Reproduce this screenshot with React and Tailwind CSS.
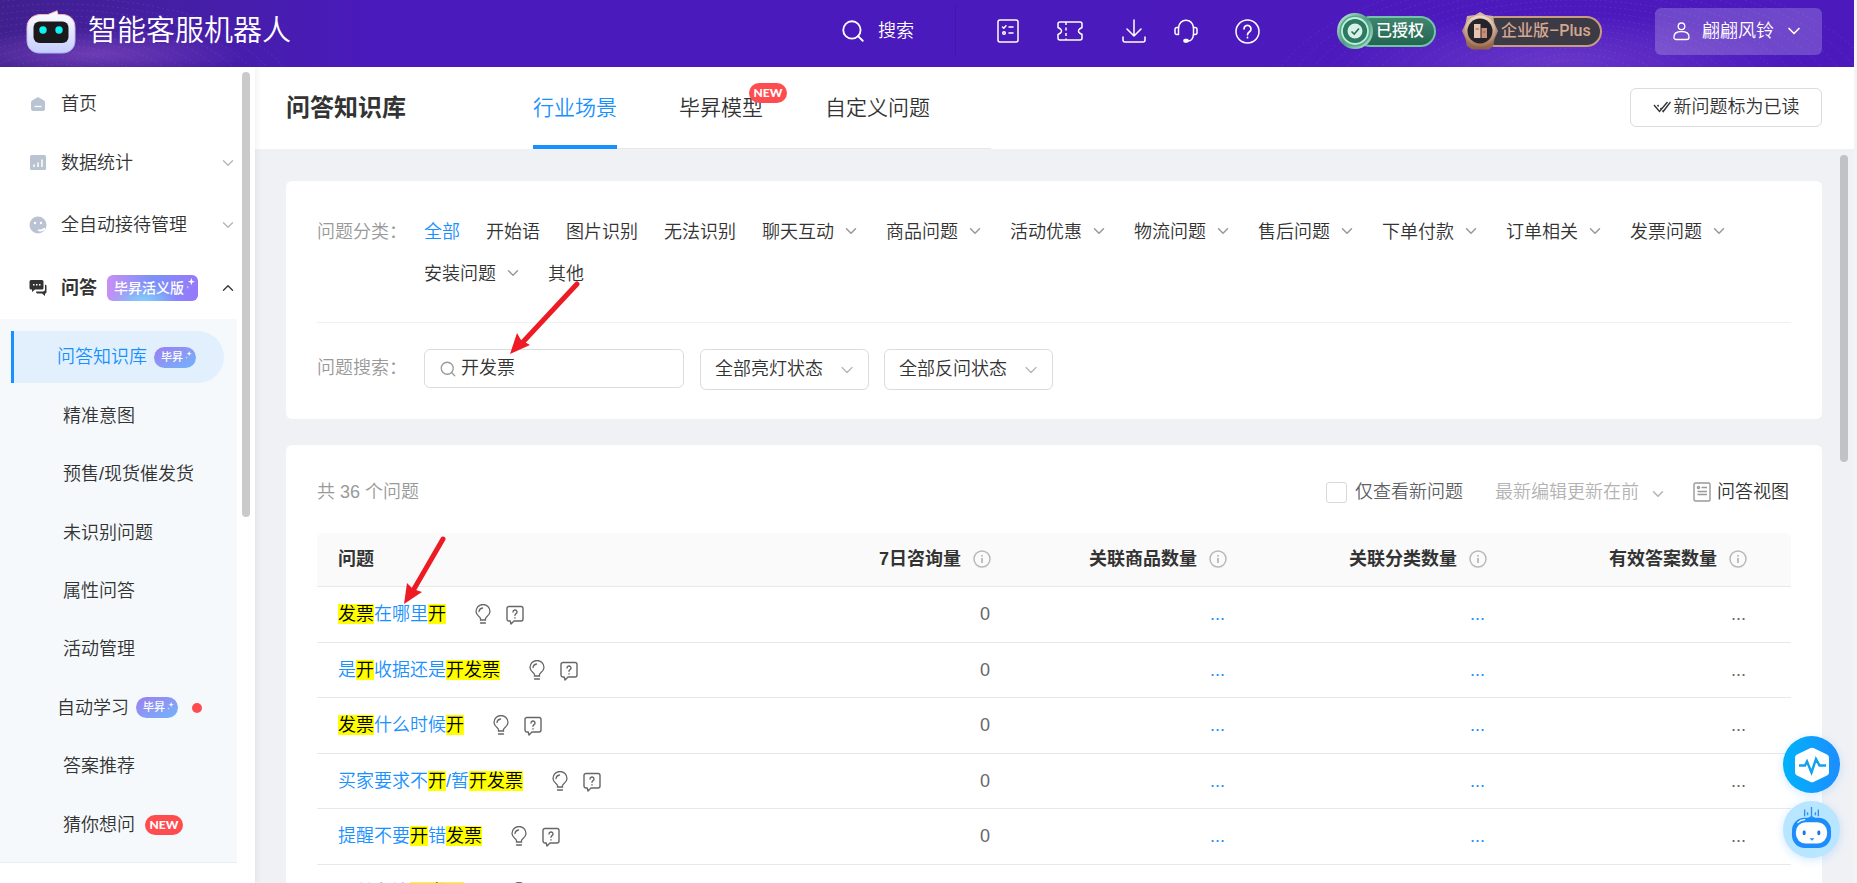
import { useState } from 'react';
import { ChevronDown, ChevronUp, Search } from 'lucide-react';

const CATEGORIES = [
    { label: '全部' },
    { label: '开始语' },
    { label: '图片识别' },
    { label: '无法识别' },
    { label: '聊天互动', more: true },
    { label: '商品问题', more: true },
    { label: '活动优惠', more: true },
    { label: '物流问题', more: true },
    { label: '售后问题', more: true },
    { label: '下单付款', more: true },
    { label: '订单相关', more: true },
    { label: '发票问题', more: true },
    { label: '安装问题', more: true },
    { label: '其他' },
];

const SUB_MENU = [
    { label: '问答知识库', badge: true },
    { label: '精准意图' },
    { label: '预售/现货催发货' },
    { label: '未识别问题' },
    { label: '属性问答' },
    { label: '活动管理' },
    { label: '自动学习', badge: true, dot: true },
    { label: '答案推荐' },
    { label: '猜你想问', isNew: true },
];

// Parts wrapped in [] are the matched keywords
const QUESTIONS = [
    '[发票]在哪里[开]',
    '是[开]收据还是[开发票]',
    '[发票]什么时候[开]',
    '买家要求不[开]/暂[开发票]',
    '提醒不要[开]错[发票]',
    '下单备注[开发票]吗',
];

const COLUMNS = ['7日咨询量', '关联商品数量', '关联分类数量', '有效答案数量'];

const Sparkle = ({ className }) => (
    <svg viewBox="0 0 10 12" className={className} fill="#fff">
        <path d="M6 0l1 3 3 1-3 1-1 3-1-3-3-1 3-1z" />
        <path d="M2 8l.5 1.500L4 10l-1.500.5L2 12l-.5-1.500L0 10l1.500-.5z" opacity=".6" />
    </svg>
);

const BishengBadge = () => (
    <span className="flex h-[21px] w-[42px] items-center rounded-full bg-linear-to-br from-[#9b7df0] to-[#6cb4fb] pl-[7px] text-[11px] leading-none font-medium text-white">
        毕昇
        <Sparkle className="mb-1 ml-[2px] h-2 w-[7px]" />
    </span>
);

const NewBadge = () => (
    <span className="flex h-5 w-[38px] items-center justify-center rounded-full bg-[#ff4d4f] font-[Lato] text-xs leading-none font-black text-white">
        NEW
    </span>
);

const InfoIcon = () => (
    <svg viewBox="0 0 18 18" className="size-[18px]" fill="none" stroke="#b8b8b8" strokeWidth="1.500">
        <circle cx="9" cy="9" r="8" />
        <path d="M9 8v5M9 5v1.500" strokeWidth="1.800" />
    </svg>
);

const BulbIcon = () => (
    <svg viewBox="0 0 16 20" className="h-5 w-4" fill="none" stroke="#666" strokeWidth="1.300" strokeLinecap="round">
        <path d="M5.500 16v-1.500C5.500 12.800 1 11.500 1 7.500a7 7 0 0 1 14 0c0 4-4.500 5.300-4.500 7V16z" />
        <path d="M4 7.500A4 4 0 0 1 7.500 4M5.500 19h5" />
    </svg>
);

const AskIcon = () => (
    <svg viewBox="0 0 18 20" className="mt-[2px] h-5 w-[18px]" fill="none" stroke="#666" strokeWidth="1.400" strokeLinecap="round" strokeLinejoin="round">
        <path d="M3 1.500h12a2 2 0 0 1 2 2V14a2 2 0 0 1-2 2H8l-3 3-.8-3H3a2 2 0 0 1-2-2V3.500a2 2 0 0 1 2-2z" />
        <path d="M7 7a2 2 0 1 1 3 1.700c-.7.4-1 .8-1 1.600M9 12.800v.2" />
    </svg>
);

const Logo = () => (
    <svg viewBox="0 0 50 44" className="mb-[3px] h-11 w-[50px]">
        <defs>
            <linearGradient id="logoBody" x1="0" y1="0" x2="0" y2="1">
                <stop offset="0" stopColor="#fff" />
                <stop offset="1" stopColor="#c5cdfd" />
            </linearGradient>
            <linearGradient id="logoEdge" x1="0" y1="0" x2="0" y2="1">
                <stop offset="0" stopColor="#ffb3b0" />
                <stop offset="1" stopColor="#a9b6f7" />
            </linearGradient>
        </defs>
        <path d="M15 4.500h7L31 .8l1 3.700h4c8 0 13 5 13 13V30c0 8-5 13-13 13H14C6 43 1 38 1 30V17.500c0-8 6-13 14-13z" fill="url(#logoBody)" stroke="url(#logoEdge)" />
        <rect x="7.500" y="11.500" width="35" height="21.500" rx="6" fill="#1a1a1c" />
        <circle cx="17" cy="20" r="3.700" fill="#0ff1f5" />
        <circle cx="33" cy="20" r="3.700" fill="#0ff1f5" />
    </svg>
);

const HeaderWaves = () => (
    <svg className="absolute inset-0 size-full" aria-hidden="true">
        <defs>
            <radialGradient id="glowLeft">
                <stop offset="0" stopColor="#8a4fc4" stopOpacity=".6" />
                <stop offset="1" stopColor="#8a4fc4" stopOpacity="0" />
            </radialGradient>
            <radialGradient id="glowRight">
                <stop offset="0" stopColor="#7a4ad0" stopOpacity=".6" />
                <stop offset="1" stopColor="#7a4ad0" stopOpacity="0" />
            </radialGradient>
        </defs>
        <ellipse cx="95" cy="54" rx="150" ry="26" fill="url(#glowLeft)" />
        <ellipse cx="84%" cy="60" rx="230" ry="46" fill="url(#glowRight)" />
        <g fill="none" stroke="#9a78dc" strokeOpacity=".2" strokeDasharray="2 3">
            {Array.from({ length: 12 }, (_, i) => (
                <ellipse key={i} cx="60" cy="100" rx={60 + i * 16} ry={36 + i * 6} />
            ))}
            {Array.from({ length: 16 }, (_, i) => (
                <ellipse key={i} cx="85%" cy="110" rx={70 + i * 16} ry={50 + i * 6} />
            ))}
        </g>
    </svg>
);

const HeaderIcons = () => (
    <div className="flex items-center">
        <button aria-label="任务" className="mr-[38px]">
            <svg viewBox="0 0 22 24" className="h-6 w-[22px]" fill="none" stroke="#fff" strokeWidth="1.500" strokeLinecap="round" strokeLinejoin="round">
                <rect x="1" y="1" width="20" height="22" rx="2" />
                <path d="M5.500 8l1.300 1.300L9 6.800M12 8h4M12 14h4" />
                <circle cx="7" cy="14" r="1.300" />
            </svg>
        </button>
        <button aria-label="卡券" className="mr-[39px]">
            <svg viewBox="0 0 26 20" className="h-5 w-[26px]" fill="none" stroke="#fff" strokeWidth="1.500" strokeLinejoin="round">
                <path d="M3 1h20a2 2 0 0 1 2 2v3.500l-2.500 1.500a2.500 2.500 0 0 0 0 4l2.500 1.500V17a2 2 0 0 1-2 2H3a2 2 0 0 1-2-2v-3.500L3.500 12a2.500 2.500 0 0 0 0-4L1 6.500V3a2 2 0 0 1 2-2z" />
                <path d="M9 1v18" strokeDasharray="3 2.500" />
            </svg>
        </button>
        <button aria-label="下载" className="mr-[28px]">
            <svg viewBox="0 0 24 24" className="size-6" fill="none" stroke="#fff" strokeWidth="1.500" strokeLinecap="round" strokeLinejoin="round">
                <path d="M12 1v16M5 10l7 7 7-7M1 18v3a2 2 0 0 0 2 2h18a2 2 0 0 0 2-2v-3" />
            </svg>
        </button>
        <button aria-label="客服" className="mr-[37px]">
            <svg viewBox="0 0 24 24" className="size-6" fill="none" stroke="#fff" strokeWidth="1.500" strokeLinecap="round" strokeLinejoin="round">
                <path d="M4.500 8.500C5.300 4 8 1.200 12 1.200s6.700 2.800 7.500 7.300M19.500 15.500c-.5 4-2.500 6.500-5.500 6.500" />
                <path d="M4.500 8.500H3a2 2 0 0 0-2 2v3a2 2 0 0 0 2 2h1.500zM19.500 8.500H21a2 2 0 0 1 2 2v3a2 2 0 0 1-2 2h-1.500z" />
                <rect x="10" y="20.500" width="4" height="2.500" rx="1" fill="#fff" />
            </svg>
        </button>
        <button aria-label="帮助">
            <svg viewBox="0 0 25 25" className="size-[25px]" fill="none" stroke="#fff" strokeWidth="1.500" strokeLinecap="round">
                <circle cx="12.500" cy="12.500" r="11.500" />
                <path d="M9 9.800a3.500 3.500 0 1 1 5.500 2.900c-1.300.9-2 1.500-2 3M12.500 18.300v.4" strokeWidth="1.700" />
            </svg>
        </button>
    </div>
);

const AuthorizedBadge = () => (
    <div className="flex w-[99px] items-center">
        <svg viewBox="0 0 38 38" className="z-10 -mr-5 size-[38px] shrink-0">
            <defs>
                <linearGradient id="medalGreen" x1="0" y1="0" x2="1" y2="1">
                    <stop offset="0" stopColor="#c9f5e2" />
                    <stop offset=".5" stopColor="#4d9c80" />
                    <stop offset="1" stopColor="#b5f0da" />
                </linearGradient>
            </defs>
            <circle cx="18" cy="19" r="18" fill="url(#medalGreen)" />
            <circle cx="18" cy="19" r="15.500" fill="#5ba68c" />
            <circle cx="18" cy="19" r="13" fill="#2c7a62" stroke="#bff0dd" strokeWidth="1.800" />
            <circle cx="18" cy="19" r="7.500" fill="#d9f0e7" />
            <path d="M14.500 19.500l2.700 2.500 4.800-5.500" fill="none" stroke="#2a6e5a" strokeWidth="1.600" />
        </svg>
        <span className="flex h-[31px] flex-1 items-center rounded-full border-2 border-[#72c4a6] bg-linear-to-b from-[#3f8570] to-[#226650] pl-[19px] text-base leading-none font-medium text-white">
            已授权
        </span>
    </div>
);

const PlusBadge = () => (
    <div className="flex w-[140px] items-center">
        <svg viewBox="0 0 38 38" className="z-10 -mr-5 size-[38px] shrink-0">
            <defs>
                <linearGradient id="medalBronze" x1="0" y1="0" x2="0" y2="1">
                    <stop offset="0" stopColor="#f3dccb" />
                    <stop offset="1" stopColor="#a3704f" />
                </linearGradient>
                <linearGradient id="medalRim" x1="0" y1="0" x2="0" y2="1">
                    <stop offset="0" stopColor="#d9bda8" />
                    <stop offset="1" stopColor="#8a5f49" />
                </linearGradient>
            </defs>
            <path d="M18 0l5.500 3L31 4l1.500 7.500L36 19l-3.500 8-1.500 7-4 3.500H10L5 34l-1.500-7L0 19l3.500-7.500L5 4l8-1z" fill="url(#medalRim)" />
            <circle cx="18" cy="19" r="15.500" fill="url(#medalBronze)" />
            <circle cx="18" cy="19" r="12.500" fill="#25242a" />
            <path d="M12 12h6.500v14H12z" fill="#e8c4b0" />
            <path d="M19.500 16H25v10h-5.500z" fill="#c98f76" />
            <path d="M13.500 17h3.500M21 20h2.500" stroke="#8a5f49" />
        </svg>
        <span className="flex h-[31px] flex-1 items-center rounded-full border-2 border-[#c79c80] bg-[#3c3b45] pl-[19px] font-[Roboto,'Noto_Sans_CJK_SC',sans-serif] text-base leading-none font-medium whitespace-nowrap text-[#d3a791]">
            企业版–Plus
        </span>
    </div>
);

const Header = () => (
    <header className="relative flex h-[67px] shrink-0 items-center justify-between overflow-hidden bg-linear-to-r from-[#40208f] via-[#4a1abc] via-20% to-[#4c19bd] pr-8 pl-[26px] text-white">
        <HeaderWaves />
        <a href="#home" className="relative flex items-center gap-3">
            <Logo />
            <span className="mb-[5px] text-[29px] leading-none">智能客服机器人</span>
        </a>
        <div className="relative mb-[5px] flex items-center">
            <button className="flex items-center gap-3 text-lg">
                <Search className="size-[26px]" strokeWidth={1.7} />
                搜索
            </button>
            <span className="mx-[41px] h-[50px] w-px bg-[#4316a8]" />
            <HeaderIcons />
            <div className="ml-[77px] flex items-center gap-[26px]">
                <AuthorizedBadge />
                <PlusBadge />
            </div>
            <button className="ml-[53px] flex h-[47px] w-[167px] items-center rounded-md bg-white/20 pl-[18px] text-lg">
                <svg viewBox="0 0 18 20" className="mr-3 h-5 w-[17px]" fill="none" stroke="#fff" strokeWidth="1.400">
                    <circle cx="9" cy="5" r="3.500" />
                    <path d="M1 16.500c0-4 3-6 8-6s8 2 8 6c0 1.500-.8 2.500-2.500 2.500h-11C1.800 19 1 18 1 16.500z" />
                </svg>
                翩翩风铃
                <ChevronDown className="ml-[10px] size-5" strokeWidth={2} />
            </button>
        </div>
    </header>
);

const MenuRow = ({ icon, label, arrow }) => (
    <a href="#menu" className="flex h-[62px] items-center pl-[29px] first:mt-[9px] first:h-14">
        <span className="w-8">{icon}</span>
        <span className="flex-1">{label}</span>
        {arrow && <ChevronDown className="size-[18px] text-[#b5b5b5]" strokeWidth={1.7} />}
    </a>
);

const Sidebar = () => {
    const [active, setActive] = useState('问答知识库');

    return (
        <aside className="z-10 flex w-[255px] shrink-0 bg-white shadow-[2px_0_6px_rgba(0,0,0,0.06)]">
            <nav className="w-[237px] text-lg text-[#333]">
                <MenuRow
                    label="首页"
                    icon={
                        <svg viewBox="0 0 18 18" className="size-[18px]">
                            <path d="M9 2l6 3.500q1 .7 1 2V14q0 2-2 2H4q-2 0-2-2V7.500q0-1.300 1-2z" fill="#bac3d1" />
                            <path d="M5.500 11.500h7" stroke="#fff" strokeWidth="1.300" />
                        </svg>
                    }
                />
                <MenuRow
                    arrow
                    label="数据统计"
                    icon={
                        <svg viewBox="0 0 18 18" className="size-[18px]">
                            <rect x="1" y="1" width="16" height="15" rx="1.500" fill="#bac3d1" />
                            <path d="M5 13v-2.500M9 13V8.500M13 13V5.500" stroke="#fff" strokeWidth="1.500" />
                        </svg>
                    }
                />
                <MenuRow
                    arrow
                    label="全自动接待管理"
                    icon={
                        <svg viewBox="0 0 18 18" className="size-[18px]">
                            <circle cx="9" cy="9" r="8.500" fill="#bac3d1" />
                            <circle cx="6" cy="7" r="1.200" fill="#fff" />
                            <circle cx="12" cy="7" r="1.200" fill="#fff" />
                            <path d="M9 14q3 1.500 7-1.500" fill="none" stroke="#fff" strokeWidth="1.800" />
                        </svg>
                    }
                />
                <a href="#qa" className="flex h-[63px] items-center pl-[29px] font-bold">
                    <span className="w-8">
                        <svg viewBox="0 0 18 18" className="size-[18px]" fill="#333">
                            <path d="M2 1h11q1.500 0 1.500 1.500V9q0 1.500-1.500 1.500H6L3 13v-2.500H2Q.5 10.500.5 9V2.500Q.5 1 2 1z" />
                            <path d="M16 5.500q1.500.3 1.500 1.800V13q0 1.500-1.500 1.500V17l-3-2.500H8Q7 14 7 12.500h7q2 0 2-2z" />
                            <path d="M4 5.800h1.500M7 5.800h1.500M10 5.800h1.500" stroke="#fff" strokeWidth="1.500" />
                        </svg>
                    </span>
                    <span>问答</span>
                    <span className="ml-[10px] flex h-[26px] w-[91px] items-center rounded-md bg-[radial-gradient(ellipse_at_40%_100%,#82cffa_0%,transparent_45%),linear-gradient(90deg,#c78ff5,#7b92f8_50%,#9878fb)] pl-[7px] text-sm leading-none font-medium text-white">
                        毕昇活义版
                        <Sparkle className="mb-2 ml-[2px] h-[11px] w-[9px]" />
                    </span>
                    <ChevronUp className="ml-auto size-[18px]" strokeWidth={1.7} />
                </a>
                <ul className="grid h-[544px] auto-rows-fr border-b border-[#e3effb] bg-[#f5f9fc] pt-[9px] pb-2">
                    {SUB_MENU.map((item) => (
                        <li key={item.label} className="flex items-center pr-[13px] pl-[11px]">
                            <a
                                href="#sub"
                                onClick={() => setActive(item.label)}
                                className={`flex h-[52px] flex-1 items-center gap-[7px]
                                    ${item.label === active
                                        ? 'rounded-r-full border-l-3 border-[#1890ff] bg-[#e2f0fe] text-[#1890ff]'
                                        : 'border-l-3 border-transparent'}
                                    ${item.badge ? 'pl-[43px]' : 'pl-[49px]'}`}
                            >
                                {item.label}
                                {item.badge && <BishengBadge />}
                                {item.dot && <span className="ml-[7px] size-[10px] rounded-full bg-[#ff4d4f]" />}
                                {item.isNew && <span className="ml-[3px]"><NewBadge /></span>}
                            </a>
                        </li>
                    ))}
                </ul>
            </nav>
            <div className="pt-[5px] pl-[5px]">
                <div className="h-[445px] w-2 rounded-full bg-[#cacaca]" />
            </div>
        </aside>
    );
};

const TitleBar = () => {
    const [tab, setTab] = useState('行业场景');

    return (
        <div className="flex h-[82px] shrink-0 items-center bg-white pr-8 pl-[31px] text-[#333]">
            <h1 className="w-[247px] text-2xl font-bold">问答知识库</h1>
            <div className="flex h-full gap-[62px] border-b border-[#e8e8e8] pr-[61px] text-[21px]">
                {['行业场景', '毕昇模型', '自定义问题'].map((name) => (
                    <button
                        key={name}
                        onClick={() => setTab(name)}
                        className={`relative -mb-px border-y-4 border-t-transparent
                            ${tab === name ? 'border-b-[#1890ff] text-[#1890ff]' : 'border-b-transparent'}`}
                    >
                        {name}
                        {name === '毕昇模型' && (
                            <span className="absolute top-3 -right-6">
                                <NewBadge />
                            </span>
                        )}
                    </button>
                ))}
            </div>
            <button className="mb-[2px] ml-auto flex h-[39px] w-[192px] items-center justify-center gap-[3px] rounded-md border border-[#dcdcdc] text-lg">
                <svg viewBox="0 0 18 14" className="h-[14px] w-[18px]" fill="none" stroke="#333" strokeWidth="1.400">
                    <path d="M1 5l5.500 6.500L14.500 2M4.500 5l1.200 1.500M9.500 10.500l.7 1L17.500 2M7.500 8l1 1.200" />
                </svg>
                新问题标为已读
            </button>
        </div>
    );
};

const StatusSelect = ({ label }) => (
    <div className="grid w-[169px] items-center">
        <select
            aria-label={label}
            className="col-start-1 row-start-1 h-[41px] w-full appearance-none rounded-md border border-[#dcdcdc] bg-white pl-[14px] text-[#333]"
        >
            <option>{label}</option>
        </select>
        <ChevronDown className="pointer-events-none col-start-1 row-start-1 mr-3 size-5 justify-self-end text-[#b5b5b5]" strokeWidth={1.5} />
    </div>
);

const FilterCard = () => {
    const [category, setCategory] = useState('全部');
    const [keyword, setKeyword] = useState('开发票');

    return (
        <section className="rounded-md bg-white px-[31px] pt-[39px] pb-[29px] text-lg leading-[25px]">
            <div className="flex border-b border-[#f0f0f0] pb-[35px]">
                <span className="w-[107px] shrink-0 text-[#999]">问题分类：</span>
                <div className="flex flex-wrap gap-x-[26px] gap-y-[17px]">
                    {CATEGORIES.map((item) => (
                        <button
                            key={item.label}
                            onClick={() => setCategory(item.label)}
                            className={`flex items-center gap-2 ${category === item.label ? 'text-[#1890ff]' : 'text-[#333]'}`}
                        >
                            {item.label}
                            {item.more && <ChevronDown className="mb-[3px] size-[18px] text-[#999]" strokeWidth={2} />}
                        </button>
                    ))}
                </div>
            </div>
            <div className="mt-[26px] flex items-start">
                <label htmlFor="keyword" className="w-[107px] shrink-0 leading-[39px] text-[#999]">问题搜索：</label>
                <div className="mr-4 flex h-[39px] w-[260px] items-center gap-1 rounded-md border border-[#dcdcdc] pl-[14px]">
                    <Search className="size-[18px] shrink-0 text-[#999]" strokeWidth={1.7} />
                    <input
                        id="keyword"
                        value={keyword}
                        onChange={(e) => setKeyword(e.target.value)}
                        className="w-full min-w-0 text-[#333] outline-none"
                    />
                </div>
                <div className="flex gap-[15px]">
                    <StatusSelect label="全部亮灯状态" />
                    <StatusSelect label="全部反问状态" />
                </div>
            </div>
        </section>
    );
};

const QuestionText = ({ text }) => (
    <a href="#question" className="text-[#1890ff]">
        {text.split(/[[\]]/).map((part, i) => (
            i % 2 === 1 ? <mark key={i} className="bg-[#ff0] text-black">{part}</mark> : part
        ))}
    </a>
);

const QuestionTable = () => (
    <table className="w-full table-fixed text-lg">
        <thead>
            <tr className="h-[53px] text-[#333]">
                <th className="rounded-tl-md border-b border-[#e8e8e8] bg-[#fafafa] pl-[21px] text-left">问题</th>
                {COLUMNS.map((name, i) => (
                    <th
                        key={name}
                        className={`border-b border-[#e8e8e8] bg-[#fafafa] pr-[44px] last:rounded-tr-md
                            ${i < 2 ? 'w-[236px]' : 'w-[260px]'}`}
                    >
                        <span className="flex items-center justify-end gap-3">
                            {name}
                            <InfoIcon />
                        </span>
                    </th>
                ))}
            </tr>
        </thead>
        <tbody>
            {QUESTIONS.map((text) => (
                <tr key={text} className="odd:h-14 even:h-[55px]">
                    <td className="border-b border-[#e8e8e8] pl-[21px]">
                        <span className="flex items-center">
                            <QuestionText text={text} />
                            <span className="ml-[29px] flex items-center gap-[15px]">
                                <BulbIcon />
                                <AskIcon />
                            </span>
                        </span>
                    </td>
                    <td className="border-b border-[#e8e8e8] pr-[45px] text-right text-[#666]">0</td>
                    <td className="border-b border-[#e8e8e8] pr-[46px] text-right text-[#1890ff]">...</td>
                    <td className="border-b border-[#e8e8e8] pr-[46px] text-right text-[#1890ff]">...</td>
                    <td className="border-b border-[#e8e8e8] pr-[45px] text-right text-[#666]">...</td>
                </tr>
            ))}
        </tbody>
    </table>
);

const ResultCard = () => (
    <section className="mt-[26px] rounded-md bg-white px-[31px] pt-[31px]">
        <div className="mb-[25px] flex h-8 items-center text-lg">
            <span className="text-[#999]">共 36 个问题</span>
            <label className="mr-8 ml-auto flex items-center gap-2 text-[#606266]">
                <input type="checkbox" className="size-[21px] appearance-none rounded-[3px] border border-[#d9d9d9] bg-white" />
                仅查看新问题
            </label>
            <button className="mr-[26px] flex items-center gap-[10px] text-[#b3b3b3]">
                最新编辑更新在前
                <ChevronDown className="mt-1 size-[18px]" strokeWidth={2} />
            </button>
            <button className="flex items-center gap-[6px] pr-[2px] text-[#333]">
                <svg viewBox="0 0 18 20" className="h-5 w-[18px]" fill="none" stroke="#999" strokeWidth="1.400">
                    <rect x="1" y="1" width="16" height="18" rx="1.500" />
                    <path d="M8.500 5.500H14M4.500 9.500H14M4.500 12.500H14" />
                    <circle cx="5.500" cy="5.500" r="1" />
                </svg>
                问答视图
            </button>
        </div>
        <QuestionTable />
    </section>
);

const FloatingButtons = () => (
    <div className="absolute right-[14px] bottom-[25px] z-20 flex flex-col gap-2">
        <button aria-label="诊断" className="flex size-[57px] items-center justify-center rounded-full bg-linear-to-r from-[#00b2fa] to-[#1b8dff] shadow-[0_2px_10px_rgba(24,144,255,0.2)]">
            <svg viewBox="0 0 36 36" className="size-9">
                <path d="M16 1.200q2-1 4 0l13 6.300q2 1 2 3v15q0 2-2 3l-13 6.300q-2 1-4 0L3 28.500q-2-1-2-3v-15q0-2 2-3z" fill="#fff" />
                <path d="M5 18.500h6l2-4 4.500 11L22 12l3.500 6.500H32" fill="none" stroke="#12a0ef" strokeWidth="2.400" />
            </svg>
        </button>
        <button aria-label="助手" className="flex size-[57px] items-center justify-center rounded-full bg-[#b8e5ff] shadow-[0_2px_10px_rgba(24,144,255,0.2)]">
            <svg viewBox="0 0 42 42" className="mb-1 size-[41px]">
                <path d="M21 0v10M14 2.500v7M28 2.500v7M17 5.500v3M25 5.500v3" stroke="#2a93f5" strokeWidth="1.400" />
                <path d="M16 12l5-3 5 3z" fill="#2a93f5" />
                <rect x="1" y="11" width="40" height="31" rx="13" fill="#1d8dfb" />
                <rect x="5" y="15.500" width="32" height="22" rx="10" fill="#fff" />
                <path d="M7 16q3-3 7-3" fill="none" stroke="#fff" strokeWidth="1.200" strokeLinecap="round" />
                <rect x="12" y="24" width="3" height="5" rx="1.500" fill="#1478e8" />
                <rect x="27" y="24" width="3" height="5" rx="1.500" fill="#1478e8" />
                <path d="M19 32h5l-2.500 2.500z" fill="#1d8dfb" />
            </svg>
        </button>
    </div>
);

// Guide arrows pointing at the search box and the first matched question
const GuideArrows = () => (
    <svg viewBox="0 0 180 330" className="pointer-events-none absolute top-[280px] left-[400px] z-20 h-[330px] w-[180px]">
        <g fill="#ed1c24" stroke="#ed1c24">
            <path d="M177 4L122 63M43 259L14 309" strokeWidth="5" strokeLinecap="round" />
            <path d="M110 74l7-21 4 7 9 5zM4 324l3-21 6 6 9 3z" stroke="none" />
        </g>
    </svg>
);

const App = () => (
    <div className="relative flex h-screen flex-col overflow-hidden border-r-3 border-[#f4f4f5] bg-white font-['Liberation_Sans','Noto_Sans_CJK_SC',sans-serif] font-[350]">
        <Header />
        <div className="flex min-h-0 flex-1">
            <Sidebar />
            <div className="flex min-w-0 flex-1 flex-col bg-[#f0f1f5]">
                <TitleBar />
                <div className="flex min-h-0 flex-1">
                    <main className="min-w-0 flex-1 overflow-hidden pt-8 pl-[31px]">
                        <FilterCard />
                        <ResultCard />
                    </main>
                    <div className="w-8 pt-[6px] pl-[18px]">
                        <div className="h-[307px] w-2 rounded-full bg-[#c1c2c5]" />
                    </div>
                </div>
            </div>
        </div>
        <FloatingButtons />
        <GuideArrows />
    </div>
);

export default App;
